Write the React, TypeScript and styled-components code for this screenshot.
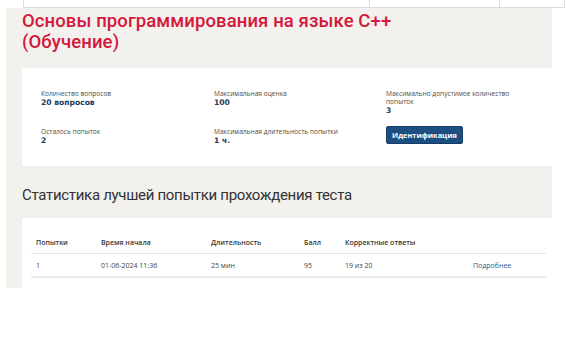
import React from 'react';
import styled, { createGlobalStyle } from 'styled-components';

const GlobalStyle = createGlobalStyle`
  body {
    margin: 0;
    background: #ffffff;
    font-family: "Open Sans", "Liberation Sans", sans-serif;
  }
`;

// Top frame remnant
const TopStrip = styled.div`
  display: grid;
  grid-template-columns: 346px 130px 1fr;
  width: 540px;
  height: 7px;
  margin-left: 23px;
  border: 1px solid #dcdcdc;
  border-top: none;
`;

const TopCell = styled.div`
  border-right: 1px solid #dcdcdc;
  &:last-child {
    border-right: none;
  }
`;

const Panel = styled.div`
  width: 530px;
  height: 280px;
  margin-left: 6px;
  padding-left: 16px;
  background: #f2f1ee;
  display: flex;
  flex-direction: column;
  overflow: hidden;
`;

const Title = styled.h1`
  margin: 3px 0 0;
  max-width: 380px;
  font-family: Roboto, "Open Sans", sans-serif;
  font-size: 18.5px;
  line-height: 21px;
  font-weight: 500;
  letter-spacing: 0.1px;
  color: #d4173a;
`;

const InfoCard = styled.div`
  margin-top: 15px;
  height: 98px;
  box-sizing: border-box;
  padding: 22px 0 0 19px;
  background: #ffffff;
  display: grid;
  grid-template-columns: 173px 172px 140px;
  grid-template-rows: 38px auto;
  align-content: start;
`;

const InfoItem = styled.div`
  display: flex;
  flex-direction: column;
  align-items: flex-start;
`;

const Label = styled.div`
  font-size: 6.6px;
  line-height: 8px;
  color: #4a4a4a;
  max-width: 130px;
`;

const Value = styled.div`
  font-family: "DejaVu Sans", Verdana, sans-serif;
  font-size: 7.6px;
  line-height: 9px;
  font-weight: 700;
  color: #233a5e;
`;

const Button = styled.button`
  margin-top: -2px;
  width: 77px;
  height: 18px;
  padding: 0;
  border: 1px solid #153e66;
  border-radius: 2px;
  background: #1c4f80;
  color: #ffffff;
  font-family: "Open Sans", sans-serif;
  font-size: 7.4px;
  font-weight: 700;
`;

const SectionTitle = styled.h2`
  margin: 18px 0 0;
  font-family: Roboto, "Open Sans", sans-serif;
  font-size: 15px;
  line-height: 22px;
  font-weight: 400;
  letter-spacing: -0.3px;
  color: #333333;
`;

const TableCard = styled.div`
  margin-top: 12px;
  flex: 1;
  background: #ffffff;
  padding: 15px 6px 0 9px;
`;

const Table = styled.table`
  width: 100%;
  table-layout: fixed;
  border-collapse: collapse;
  font-size: 7px;
  color: #444444;
`;

const Th = styled.th<{ w?: number }>`
  width: ${({ w }) => (w ? `${w}px` : 'auto')};
  text-align: left;
  font-weight: 600;
  color: #333333;
  padding: 5px 0 6px 5px;
  border-bottom: 1px solid #e6e6e6;
`;

const Td = styled.td`
  padding: 7px 0 6px 5px;
  border-bottom: 2px solid #ececec;
`;

const MoreLink = styled.a`
  color: #2a5b8c;
  text-decoration: none;
`;

const info = [
  { label: 'Количество вопросов', value: '20 вопросов' },
  { label: 'Максимальная оценка', value: '100' },
  { label: 'Максимально допустимое количество попыток', value: '3' },
  { label: 'Осталось попыток', value: '2' },
  { label: 'Максимальная длительность попытки', value: '1 ч.' },
];

export default function App() {
  return (
    <>
      <GlobalStyle />
      <TopStrip>
        <TopCell />
        <TopCell />
        <TopCell />
      </TopStrip>
      <Panel>
        <Title>Основы программирования на языке C++ (Обучение)</Title>
        <InfoCard>
          {info.map((item) => (
            <InfoItem key={item.label}>
              <Label>{item.label}</Label>
              <Value>{item.value}</Value>
            </InfoItem>
          ))}
          <InfoItem>
            <Button>Идентификация</Button>
          </InfoItem>
        </InfoCard>
        <SectionTitle>Статистика лучшей попытки прохождения теста</SectionTitle>
        <TableCard>
          <Table>
            <thead>
              <tr>
                <Th w={60}>Попытки</Th>
                <Th w={105}>Время начала</Th>
                <Th w={88}>Длительность</Th>
                <Th w={36}>Балл</Th>
                <Th w={123}>Корректные ответы</Th>
                <Th />
              </tr>
            </thead>
            <tbody>
              <tr>
                <Td>1</Td>
                <Td>01-06-2024 11:36</Td>
                <Td>25 мин</Td>
                <Td>95</Td>
                <Td>19 из 20</Td>
                <Td>
                  <MoreLink href="#">Подробнее</MoreLink>
                </Td>
              </tr>
            </tbody>
          </Table>
        </TableCard>
      </Panel>
    </>
  );
}
